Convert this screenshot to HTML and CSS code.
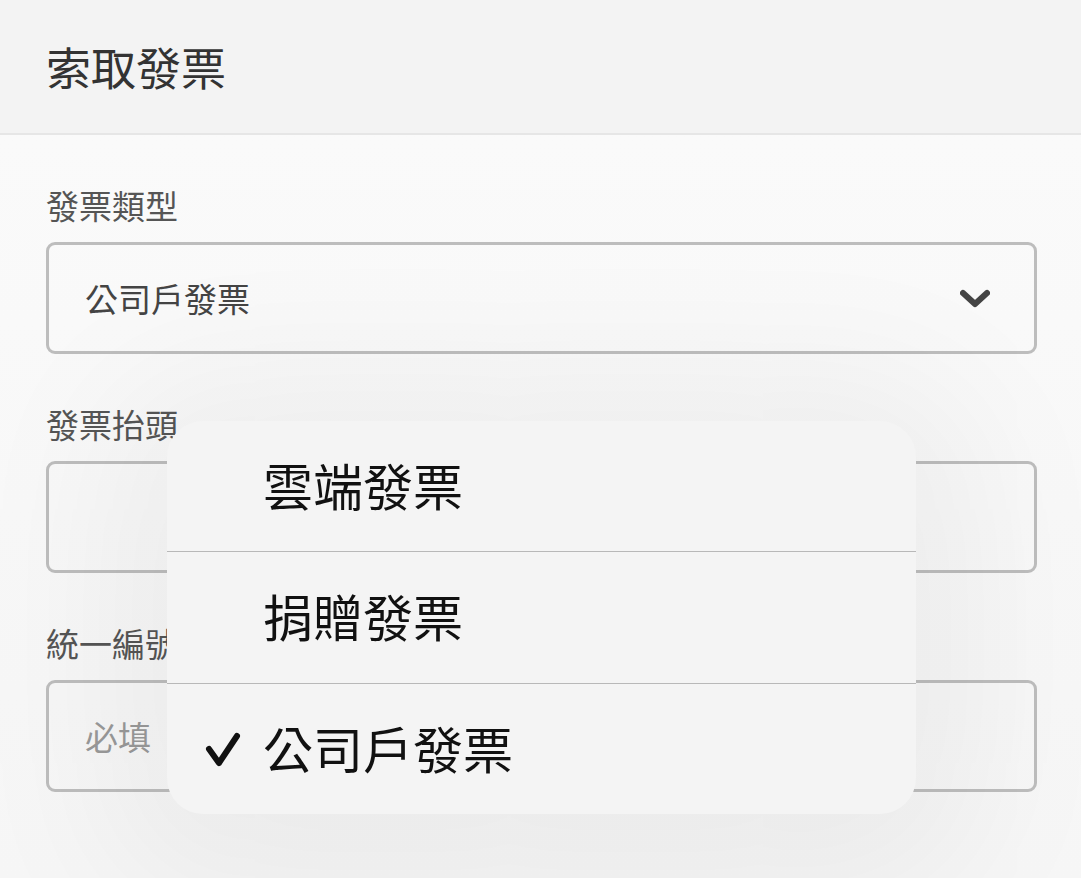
FILE: index.html
```html
<!DOCTYPE html>
<html lang="zh-Hant">
<head>
<meta charset="utf-8">
<title>索取發票</title>
<link rel="stylesheet" href="styles.css">
</head>
<body>
<header class="topbar">
  <h1 class="title">索取發票</h1>
</header>
<main class="form">
  <div class="field">
    <div class="label">發票類型</div>
    <div class="box select">
      <span class="value">公司戶發票</span>
      <svg class="chev" width="30" height="20" viewBox="0 0 30 20"><path d="M3 4 L15 15 L27 4" fill="none" stroke="#444" stroke-width="6" stroke-linecap="round" stroke-linejoin="round"/></svg>
    </div>
  </div>
  <div class="field">
    <div class="label">發票抬頭</div>
    <div class="box"></div>
  </div>
  <div class="field">
    <div class="label">統一編號</div>
    <div class="box"><span class="placeholder">必填</span></div>
  </div>
</main>
<div class="menu">
  <div class="item"><span class="check"></span><span>雲端發票</span></div>
  <div class="item"><span class="check"></span><span>捐贈發票</span></div>
  <div class="item"><span class="check"><svg width="36" height="36" viewBox="0 0 36 36"><path d="M4 17 L14 31 L32 4" fill="none" stroke="#111" stroke-width="6" stroke-linecap="round" stroke-linejoin="round"/></svg></span><span>公司戶發票</span></div>
</div>
</body>
</html>
```

FILE: styles.css
```css
html, body {
  margin: 0;
  padding: 0;
}
body {
  width: 1081px;
  height: 878px;
  overflow: hidden;
  background: #f7f7f7;
  font-family: "Noto Sans CJK TC", "Noto Sans", sans-serif;
  position: relative;
}
.topbar {
  height: 133px;
  background: #f3f3f3;
  border-bottom: 2px solid #e6e6e6;
  display: flex;
  align-items: center;
  padding-left: 46px;
  box-sizing: content-box;
}
.title {
  margin: 0;
  font-size: 45px;
  font-weight: 400;
  color: #333;
  line-height: 1;
  margin-top: -1px;
}
.form {
  padding: 47px 44px 0 46px;
  display: flex;
  flex-direction: column;
  gap: 47px;
  background: linear-gradient(#fafafa, #f6f6f6);
  height: 743px;
  box-sizing: border-box;
}
.field {
  display: flex;
  flex-direction: column;
  gap: 14px;
}
.label {
  font-size: 33px;
  line-height: 46px;
  height: 46px;
  color: #555;
}
.box {
  height: 112px;
  box-sizing: border-box;
  border: 3px solid #bdbdbd;
  border-radius: 9px;
  display: flex;
  align-items: center;
  padding: 0 44px 0 36px;
}
.select {
  justify-content: space-between;
}
.value {
  font-size: 33px;
  color: #444;
}
.chev {
  margin-top: 2px;
}
.placeholder {
  font-size: 33px;
  color: #999;
}
.menu {
  position: absolute;
  left: 167px;
  top: 421px;
  width: 749px;
  height: 393px;
  background: #f4f4f4;
  border-radius: 36px;
  box-shadow: 0 20px 160px 60px rgba(0,0,0,0.05);
  display: flex;
  flex-direction: column;
  overflow: hidden;
}
.item {
  flex: 1;
  display: flex;
  align-items: center;
  font-size: 50px;
  color: #111;
  padding-left: 38px;
  gap: 22px;
}
.item > span:last-child {
  margin-top: -4px;
}
.item + .item {
  border-top: 1px solid #b8b8b8;
}
.check {
  width: 36px;
  height: 36px;
  display: flex;
  margin-top: 2px;
}
```
